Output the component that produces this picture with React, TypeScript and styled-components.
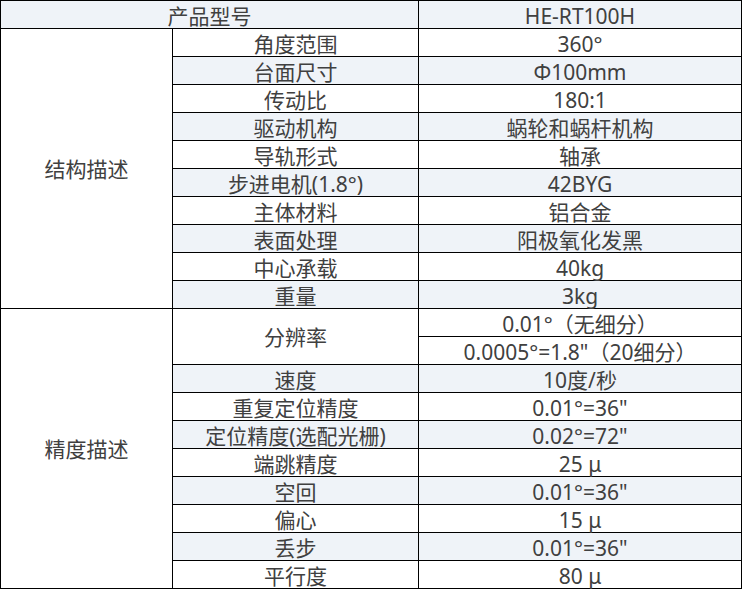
import styled, { createGlobalStyle } from 'styled-components';

const GlobalStyle = createGlobalStyle`
html, body {
	margin: 0;
	padding: 0;
	background: #ffffff;
}
body {
	font-family: "Noto Sans", "Noto Sans CJK SC", sans-serif;
}
`;

const SpecGrid = styled.div`
display: grid;
grid-template-columns: 171px 245px 322px;
grid-auto-rows: 27px;
gap: 1px;
padding: 1px;
width: 742px;
box-sizing: border-box;
background-color: #000000;
`;

const Cell = styled.div<{ $shaded?: boolean; $span?: number; $rows?: number }>`
display: flex;
align-items: center;
justify-content: center;
padding-top: 3px;
box-sizing: border-box;
grid-column: ${(p) => (p.$span ? `span ${p.$span}` : 'auto')};
grid-row: ${(p) => (p.$rows ? `span ${p.$rows}` : 'auto')};
background-color: ${(p) => (p.$shaded ? '#eff3f8' : '#ffffff')};
color: #404040;
font-size: 21px;
line-height: 24px;
white-space: nowrap;
`;

const GroupCell = styled(Cell)`
padding-top: 0;
`;

type Spec = { label: string; value: string; shaded: boolean };

const structure: Spec[] = [
	{ label: '角度范围', value: '360°', shaded: false },
	{ label: '台面尺寸', value: 'Φ100mm', shaded: true },
	{ label: '传动比', value: '180:1', shaded: false },
	{ label: '驱动机构', value: '蜗轮和蜗杆机构', shaded: true },
	{ label: '导轨形式', value: '轴承', shaded: false },
	{ label: '步进电机(1.8°)', value: '42BYG', shaded: true },
	{ label: '主体材料', value: '铝合金', shaded: false },
	{ label: '表面处理', value: '阳极氧化发黑', shaded: true },
	{ label: '中心承载', value: '40kg', shaded: false },
	{ label: '重量', value: '3kg', shaded: true },
];

const precision: Spec[] = [
	{ label: '速度', value: '10度/秒', shaded: true },
	{ label: '重复定位精度', value: '0.01°=36"', shaded: false },
	{ label: '定位精度(选配光栅)', value: '0.02°=72"', shaded: true },
	{ label: '端跳精度', value: '25 μ', shaded: false },
	{ label: '空回', value: '0.01°=36"', shaded: true },
	{ label: '偏心', value: '15 μ', shaded: false },
	{ label: '丢步', value: '0.01°=36"', shaded: true },
	{ label: '平行度', value: '80 μ', shaded: false },
];

const SpecRows = ({ rows }: { rows: Spec[] }) => (
	<>
		{rows.map((r) => [
			<Cell key={r.label + '-l'} $shaded={r.shaded}>{r.label}</Cell>,
			<Cell key={r.label + '-v'} $shaded={r.shaded}>{r.value}</Cell>,
		])}
	</>
);

export default function App() {
	return (
		<>
			<GlobalStyle />
			<SpecGrid>
				<Cell $shaded $span={2}>产品型号</Cell>
				<Cell $shaded>HE-RT100H</Cell>

				<GroupCell $rows={10}>结构描述</GroupCell>
				<SpecRows rows={structure} />

				<GroupCell $rows={10}>精度描述</GroupCell>
				<GroupCell $rows={2}>分辨率</GroupCell>
				<Cell>0.01°（无细分）</Cell>
				<Cell>0.0005°=1.8"（20细分）</Cell>
				<SpecRows rows={precision} />
			</SpecGrid>
		</>
	);
}
